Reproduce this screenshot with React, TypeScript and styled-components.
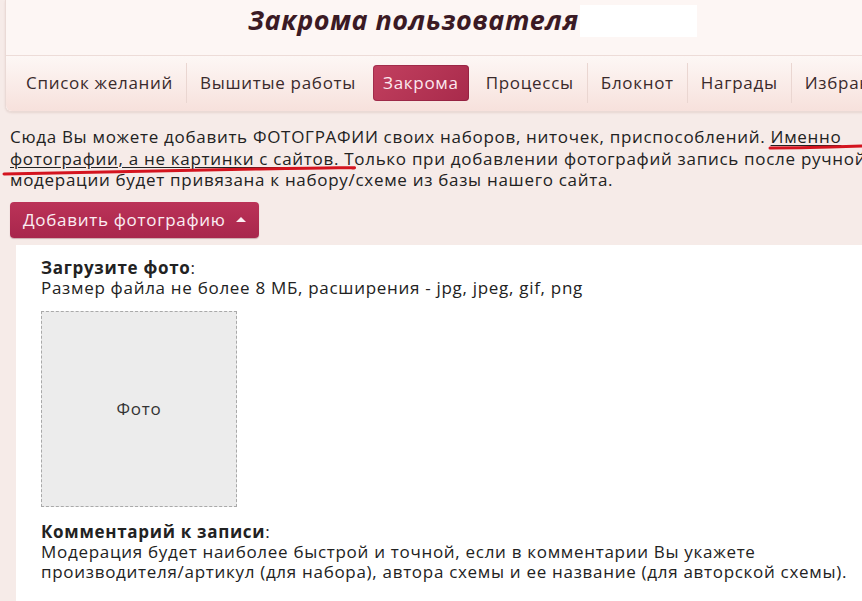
import styled, { createGlobalStyle } from 'styled-components'

const Global = createGlobalStyle`
  html, body {
    margin: 0;
    padding: 0;
    background: #f6ebe8;
    overflow: hidden;
  }
  body {
    font-family: "Open Sans", "Noto Sans", sans-serif;
    color: #222;
  }
`

const Page = styled.div`
  position: relative;
  width: 940px;
  height: 601px;
`

const Header = styled.div`
  margin-left: 5px;
  border: 1px solid #eadad6;
  border-top: none;
  border-radius: 0 0 6px 6px;
  background: #fdf6f4;
  box-shadow: 0 1px 2px rgba(150, 100, 90, 0.15);
`

const TitleRow = styled.div`
  height: 55px;
  display: flex;
  align-items: flex-start;
  padding: 2px 0 0 242px;
  box-sizing: border-box;
  gap: 1px;
`

const Title = styled.h1`
  margin: 0;
  font-family: "Open Sans", "Noto Sans", sans-serif;
  font-style: italic;
  font-weight: 700;
  font-size: 27px;
  line-height: 36px;
  letter-spacing: 0.5px;
  color: #3b1a24;
`

const Redacted = styled.div`
  width: 117px;
  height: 32px;
  margin-top: 3px;
  background: #fff;
`

const Nav = styled.nav`
  height: 56px;
  border-top: 1px solid #eddcd8;
  background: linear-gradient(#fdf7f5, #f7e1dc);
  border-radius: 0 0 6px 6px;
  display: flex;
  align-items: center;
  padding: 0 0 2px 7px;
  box-sizing: border-box;
`

const Tab = styled.div<{ $active?: boolean; $plain?: boolean }>`
  display: flex;
  align-items: center;
  height: 40px;
  padding: 0 13px;
  border-left: ${p => (p.$plain || p.$active ? 'none' : '1px solid #ead6d1')};
  font-size: 17px;
  letter-spacing: 0.7px;
  white-space: nowrap;
  color: ${p => (p.$active ? '#fde8ee' : '#3a2a2c')};
  ${p =>
    p.$active &&
    `
    height: 36px;
    margin: 0 4px;
    padding: 0 10px;
    border-radius: 4px;
    background: linear-gradient(135deg, #c2405f, #a82a4b);
    box-shadow: inset 0 0 0 1px rgba(120, 20, 50, 0.4);
  `}
`

const Intro = styled.p`
  margin: 0;
  padding: 14px 0 0 10px;
  font-size: 17px;
  line-height: 21.5px;
  letter-spacing: 0.7px;
  white-space: nowrap;
`

const Marked = styled.span`
  text-decoration: underline;
  text-underline-offset: 2px;
`

const AddButton = styled.button`
  margin: 11px 0 0 10px;
  height: 36px;
  padding: 0 13px;
  display: flex;
  align-items: center;
  gap: 10px;
  border: none;
  border-radius: 4px;
  background: linear-gradient(#bb3358, #a8264c);
  color: #fbeef2;
  font-family: "Open Sans", "Noto Sans", sans-serif;
  font-size: 17px;
  letter-spacing: 0.7px;
  box-shadow: 0 1px 1px rgba(100, 20, 40, 0.3);
`

const Caret = styled.span`
  width: 0;
  height: 0;
  border-left: 5px solid transparent;
  border-right: 5px solid transparent;
  border-bottom: 5px solid #fbeef2;
  margin-top: -1px;
`

const Panel = styled.section`
  margin: 7px 0 0 16px;
  background: #fff;
  padding: 13px 25px 30px;
  font-size: 17px;
  line-height: 20px;
  letter-spacing: 0.7px;
  min-height: 400px;
`

const Label = styled.div`
  white-space: nowrap;
  b {
    font-weight: 700;
  }
`

const PhotoBox = styled.div`
  width: 194px;
  height: 194px;
  margin: 13px 0 15px;
  background: #ececec;
  border: 1px dashed #a9a9a9;
  display: flex;
  align-items: center;
  justify-content: center;
  color: #333;
`

const Scribble = styled.svg`
  position: absolute;
  left: 0;
  top: 0;
  pointer-events: none;
`

export default function App() {
  const tabs = ['Список желаний', 'Вышитые работы', 'Закрома', 'Процессы', 'Блокнот', 'Награды', 'Избранное']
  return (
    <>
      <Global />
      <Page>
        <Header>
          <TitleRow>
            <Title>Закрома пользователя</Title>
            <Redacted />
          </TitleRow>
          <Nav>
            {tabs.map((t, i) => (
              <Tab key={t} $plain={i === 0 || i === 3} $active={t === 'Закрома'}>
                {t}
              </Tab>
            ))}
          </Nav>
        </Header>

        <Intro>
          Сюда Вы можете добавить ФОТОГРАФИИ своих наборов, ниточек, приспособлений. <Marked>Именно</Marked>
          <br />
          <Marked>фотографии, а не картинки с сайтов.</Marked> Только при добавлении фотографий запись после ручной
          <br />
          модерации будет привязана к набору/схеме из базы нашего сайта.
        </Intro>

        <AddButton>
          Добавить фотографию <Caret />
        </AddButton>

        <Panel>
          <Label>
            <b>Загрузите фото</b>:
            <br />
            Размер файла не более 8 МБ, расширения - jpg, jpeg, gif, png
          </Label>
          <PhotoBox>Фото</PhotoBox>
          <Label>
            <b>Комментарий к записи</b>:
            <br />
            Модерация будет наиболее быстрой и точной, если в комментарии Вы укажете
            <br />
            производителя/артикул (для набора), автора схемы и ее название (для авторской схемы).
          </Label>
        </Panel>

        <Scribble width="862" height="601" viewBox="0 0 862 601">
          <path d="M770 148 Q800 148 830 147 T862 146" stroke="#d4141f" strokeWidth="3" fill="none" strokeLinecap="round" />
          <path d="M4 174 Q150 171 260 169 T352 168" stroke="#d4141f" strokeWidth="3" fill="none" strokeLinecap="round" />
        </Scribble>
      </Page>
    </>
  )
}
